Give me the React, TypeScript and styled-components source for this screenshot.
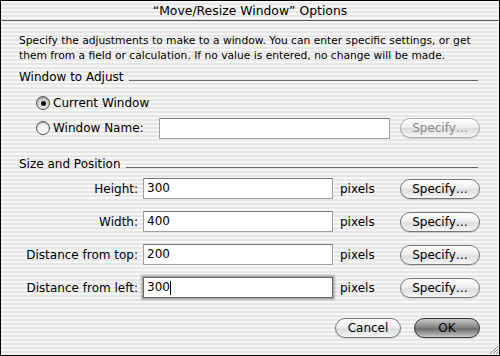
import styled, { createGlobalStyle, css } from 'styled-components'

const GlobalStyle = createGlobalStyle`
  html, body {
    margin: 0;
    padding: 0;
    background: #fff;
  }
  body {
    font-family: "DejaVu Sans", "Liberation Sans", sans-serif;
    color: #000;
  }
`

const sizeRows = [
  { label: 'Height:', value: '300' },
  { label: 'Width:', value: '400' },
  { label: 'Distance from top:', value: '200' },
  { label: 'Distance from left:', value: '300', focused: true },
]

/**
 * 옵션 대화상자
 */
export default function App() {
  return (
    <>
      <GlobalStyle />
      <StyledWindow>
        <StyledTitleBar>“Move/Resize Window” Options</StyledTitleBar>
        <StyledBody>
          <StyledDescription>
            Specify the adjustments to make to a window. You can enter specific settings, or get
            <br />
            them from a field or calculation. If no value is entered, no change will be made.
          </StyledDescription>

          <SectionHeader title="Window to Adjust" spacing={7} />
          <StyledRadioList>
            <StyledRadioRow>
              <Radio checked />
              <StyledRadioLabel>Current Window</StyledRadioLabel>
            </StyledRadioRow>
            <StyledRadioRow>
              <Radio />
              <StyledRadioLabel>Window Name:</StyledRadioLabel>
              <StyledField $width={231} $ml={15} />
              <StyledButton $disabled>Specify…</StyledButton>
            </StyledRadioRow>
          </StyledRadioList>

          <SectionHeader title="Size and Position" spacing={19} />
          <StyledSizeGrid>
            {sizeRows.map(({ label, value, focused }) => (
              <StyledSizeRow key={label}>
                <StyledSizeLabel>{label}</StyledSizeLabel>
                <StyledField $width={190} $focused={focused}>
                  {value}
                  {focused && <StyledCaret />}
                </StyledField>
                <StyledUnit>pixels</StyledUnit>
                <StyledButton>Specify…</StyledButton>
              </StyledSizeRow>
            ))}
          </StyledSizeGrid>

          <StyledFooter>
            <StyledButton $wide>Cancel</StyledButton>
            <StyledButton $wide $default>OK</StyledButton>
          </StyledFooter>
        </StyledBody>
        <ResizeGrip />
      </StyledWindow>
    </>
  )
}

const SectionHeader = ({ title, spacing }: { title: string; spacing: number }) => (
  <StyledSectionHeader $spacing={spacing}>
    <span>{title}</span>
    <StyledRule />
  </StyledSectionHeader>
)

const Radio = ({ checked = false }: { checked?: boolean }) => (
  <StyledRadio $checked={checked}>{checked && <StyledRadioDot />}</StyledRadio>
)

const ResizeGrip = () => (
  <StyledGrip width="12" height="12" viewBox="0 0 12 12">
    <path d="M11 3 L3 11 M11 6 L6 11 M11 9 L9 11" stroke="#888" strokeWidth="1" />
    <path d="M11 4 L4 11 M11 7 L7 11" stroke="#fff" strokeWidth="1" />
  </StyledGrip>
)

const pinstripe = css`
  background: repeating-linear-gradient(
    to bottom,
    #f6f6f6 0px,
    #f6f6f6 2px,
    #e6e6e6 2px,
    #e6e6e6 4px
  );
`

const StyledWindow = styled.div`
  position: relative;
  box-sizing: border-box;
  width: 500px;
  height: 356px;
  border: 1px solid #000;
  overflow: hidden;
  ${pinstripe}
`

const StyledTitleBar = styled.div`
  height: 20px;
  box-sizing: border-box;
  border-bottom: 1px solid #555;
  text-align: center;
  font-size: 12.4px;
  line-height: 19px;
`

const StyledBody = styled.div`
  padding: 12px 19px 0 18px;
  display: flex;
  flex-direction: column;
`

const StyledDescription = styled.p`
  margin: 0;
  font-size: 10.7px;
  line-height: 15px;
  white-space: nowrap;
`

const StyledSectionHeader = styled.div<{ $spacing: number }>`
  display: flex;
  align-items: center;
  gap: 5px;
  margin-top: ${({ $spacing }) => $spacing}px;
  font-size: 12px;
  line-height: 14px;
`

const StyledRule = styled.div`
  flex: 1;
  height: 0;
  margin-top: 6px;
  margin-right: 2px;
  border-top: 1px solid #666;
`

const StyledRadioList = styled.div`
  display: flex;
  flex-direction: column;
  gap: 5px;
  margin-top: 9px;
  padding-left: 17px;
`

const StyledRadioRow = styled.div`
  display: flex;
  align-items: center;
  height: 20px;
`

const StyledRadio = styled.div<{ $checked: boolean }>`
  box-sizing: border-box;
  width: 14px;
  height: 14px;
  border-radius: 50%;
  border: 1px solid #555;
  background: ${({ $checked }) =>
    $checked
      ? 'radial-gradient(circle at 50% 70%, #f4f4f4 0%, #c4c4c4 70%, #9a9a9a 100%)'
      : 'radial-gradient(circle at 50% 80%, #ffffff 0%, #f0f0f0 60%, #c8c8c8 100%)'};
  display: flex;
  align-items: center;
  justify-content: center;
  box-shadow: inset 0 1px 1px rgba(0, 0, 0, 0.25);
`

const StyledRadioDot = styled.div`
  width: 5px;
  height: 5px;
  border-radius: 50%;
  background: #111;
`

const StyledRadioLabel = styled.span`
  margin-left: 3px;
  font-size: 12px;
`

const StyledField = styled.div<{ $width: number; $ml?: number; $focused?: boolean }>`
  box-sizing: border-box;
  width: ${({ $width }) => $width}px;
  height: 21px;
  margin-left: ${({ $ml }) => $ml ?? 0}px;
  padding: 0 3px;
  background: #fff;
  border: 1px solid #a0a0a0;
  border-top-color: #777;
  font-size: 12px;
  line-height: 19px;
  display: flex;
  align-items: center;
  ${({ $focused }) =>
    $focused &&
    css`
      border-color: #666;
      box-shadow: 0 0 0 1px #aaa, 0 0 2px 2px rgba(0, 0, 0, 0.25);
    `}
`

const StyledCaret = styled.span`
  display: inline-block;
  width: 1px;
  height: 14px;
  background: #000;
`

const StyledButton = styled.div<{ $disabled?: boolean; $wide?: boolean; $default?: boolean }>`
  box-sizing: border-box;
  width: ${({ $wide }) => ($wide ? 66 : 80)}px;
  height: 20px;
  margin-left: auto;
  border-radius: 10px;
  border: 1px solid ${({ $disabled }) => ($disabled ? '#aaa' : '#777')};
  background: linear-gradient(to bottom, #fdfdfd 0%, #efefef 45%, #dcdcdc 55%, #f6f6f6 100%);
  font-size: 12px;
  line-height: 18px;
  text-align: center;
  color: ${({ $disabled }) => ($disabled ? '#8a8a8a' : '#000')};
  box-shadow: 0 1px 1px rgba(0, 0, 0, 0.15);
  ${({ $default }) =>
    $default &&
    css`
      border-color: #333;
      background: linear-gradient(to bottom, #c8c8c8 0%, #8e8e8e 40%, #6f6f6f 55%, #a8a8a8 85%, #d0d0d0 100%);
    `}
`

const StyledSizeGrid = styled.div`
  display: flex;
  flex-direction: column;
  gap: 12px;
  margin-top: 7px;
`

const StyledSizeRow = styled.div`
  display: grid;
  grid-template-columns: 119px 190px 56px 1fr;
  column-gap: 5px;
  align-items: center;
  height: 21px;
`

const StyledSizeLabel = styled.span`
  text-align: right;
  font-size: 12px;
`

const StyledUnit = styled.span`
  font-size: 12px;
  padding-left: 2px;
`

const StyledFooter = styled.div`
  display: flex;
  justify-content: flex-end;
  gap: 13px;
  margin-top: 20px;

  & > div {
    margin-left: 0;
  }
`

const StyledGrip = styled.svg`
  position: absolute;
  right: 0;
  bottom: 0;
`
